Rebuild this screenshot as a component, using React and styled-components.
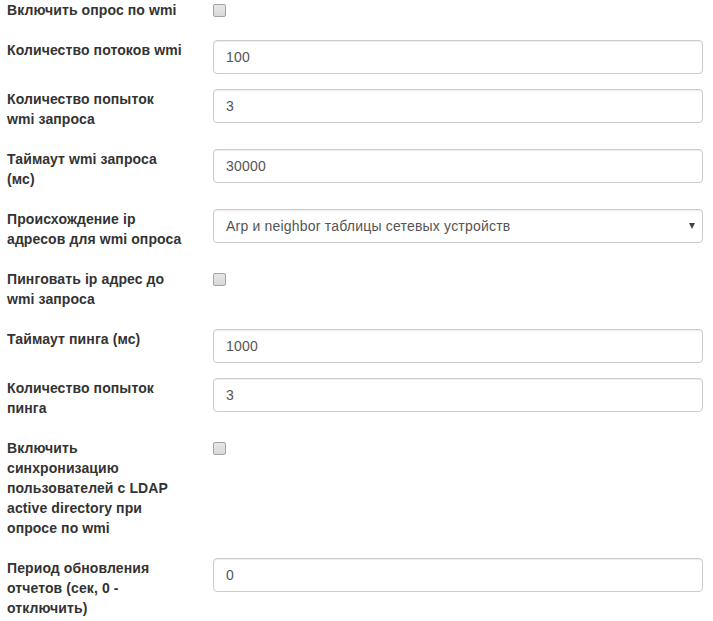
import React from "react";
import styled, { createGlobalStyle } from "styled-components";

const GlobalStyle = createGlobalStyle`
  html, body {
    margin: 0;
    padding: 0;
    background: #fff;
  }
  body {
    font-family: "Liberation Sans", Arial, sans-serif;
    color: #333;
  }
`;

const rows = [
  { label: ["Включить опрос по wmi"], type: "checkbox" },
  { label: ["Количество потоков wmi"], type: "text", value: "100" },
  { label: ["Количество попыток", "wmi запроса"], type: "text", value: "3" },
  { label: ["Таймаут wmi запроса", "(мс)"], type: "text", value: "30000" },
  {
    label: ["Происхождение ip", "адресов для wmi опроса"],
    type: "select",
    value: "Arp и neighbor таблицы сетевых устройств",
  },
  { label: ["Пинговать ip адрес до", "wmi запроса"], type: "checkbox" },
  { label: ["Таймаут пинга (мс)"], type: "text", value: "1000" },
  { label: ["Количество попыток", "пинга"], type: "text", value: "3" },
  {
    label: [
      "Включить",
      "синхронизацию",
      "пользователей с LDAP",
      "active directory при",
      "опросе по wmi",
    ],
    type: "checkbox",
  },
  {
    label: ["Период обновления", "отчетов (сек, 0 -", "отключить)"],
    type: "text",
    value: "0",
  },
];

const App = () => {
  return (
    <>
      <GlobalStyle />
      <Form>
        {rows.map((row, i) => (
          <Row key={i}>
            <Label>
              {row.label.map((line, j) => (
                <Line key={j}>{line}</Line>
              ))}
            </Label>
            <Control>
              {row.type === "checkbox" && <Checkbox type="checkbox" />}
              {row.type === "text" && (
                <Input type="text" defaultValue={row.value} />
              )}
              {row.type === "select" && (
                <SelectWrap>
                  <Select defaultValue={row.value}>
                    <option>{row.value}</option>
                  </Select>
                  <Caret />
                </SelectWrap>
              )}
            </Control>
          </Row>
        ))}
      </Form>
    </>
  );
};

export default App;

const Form = styled.form`
  width: 713px;
  padding: 0 10px 0 7px;
  box-sizing: border-box;
`;

const Row = styled.div`
  display: grid;
  grid-template-columns: 191px 1fr;
  column-gap: 15px;
  align-items: start;
  margin-bottom: 15px;
`;

const Label = styled.label`
  display: flex;
  flex-direction: column;
  font-size: 14px;
  font-weight: bold;
  line-height: 20px;
  letter-spacing: 0.1px;
  color: #333;
  padding-bottom: 5px;
`;

const Line = styled.span`
  white-space: nowrap;
`;

const Control = styled.div`
  display: flex;
  flex-direction: column;
`;

const Checkbox = styled.input`
  appearance: none;
  -webkit-appearance: none;
  width: 13px;
  height: 13px;
  margin: 4px 0 0 0;
  border: 1px solid #a3a3a3;
  border-radius: 2px;
  background: linear-gradient(#e6e6e6, #d9d9d9);
  box-sizing: border-box;
`;

const Input = styled.input`
  display: block;
  width: 100%;
  height: 34px;
  box-sizing: border-box;
  padding: 6px 12px;
  font-family: "Liberation Sans", Arial, sans-serif;
  font-size: 14px;
  letter-spacing: 0.2px;
  color: #555;
  background: #fff;
  border: 1px solid #ccc;
  border-radius: 4px;
  box-shadow: inset 0 1px 1px rgba(0, 0, 0, 0.075);
  outline: none;
`;

const SelectWrap = styled.div`
  position: relative;
`;

const Select = styled.select`
  display: block;
  width: 100%;
  height: 34px;
  box-sizing: border-box;
  padding: 6px 12px;
  appearance: none;
  -webkit-appearance: none;
  font-family: "Liberation Sans", Arial, sans-serif;
  font-size: 14px;
  letter-spacing: 0.2px;
  color: #555;
  background: #fff;
  border: 1px solid #ccc;
  border-radius: 4px;
  box-shadow: inset 0 1px 1px rgba(0, 0, 0, 0.075);
  outline: none;
`;

const Caret = styled.span`
  position: absolute;
  right: 8px;
  top: 14px;
  width: 0;
  height: 0;
  border-left: 3px solid transparent;
  border-right: 3px solid transparent;
  border-top: 6px solid #444;
  pointer-events: none;
`;
